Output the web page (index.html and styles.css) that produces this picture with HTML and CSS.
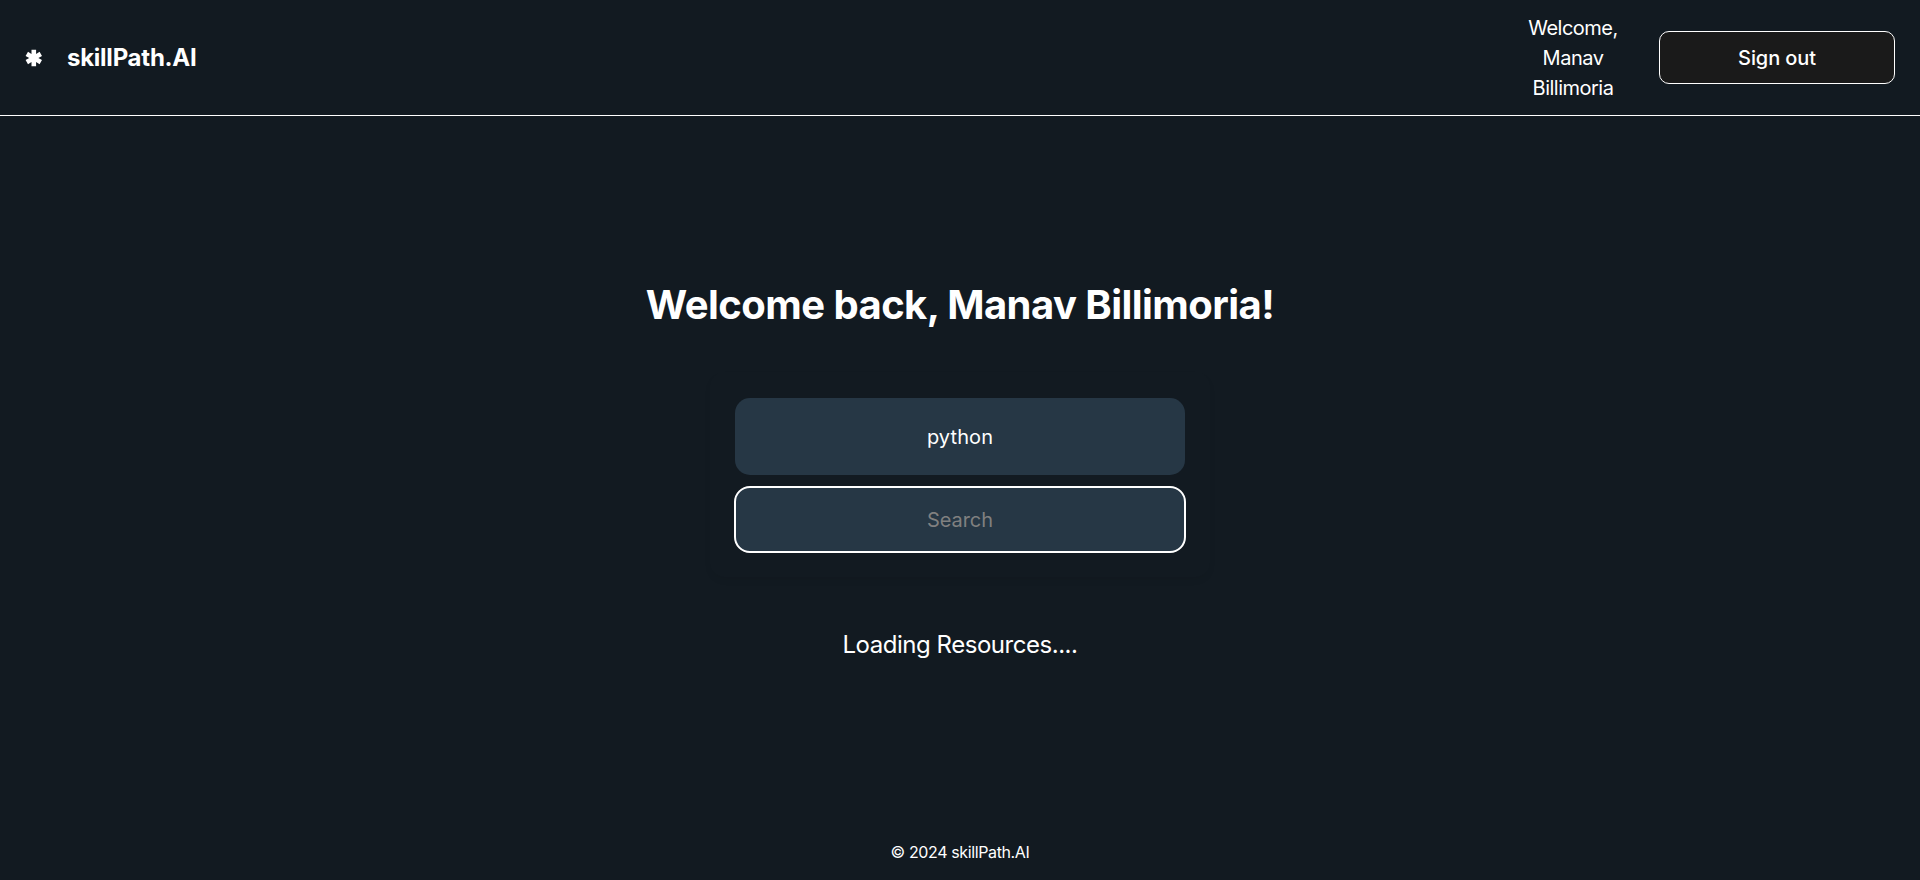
FILE: index.html
```
<!DOCTYPE html>
<html lang="en">
<head>
  <meta charset="UTF-8">
  <title>skillPath.AI</title>
  <link rel="stylesheet" href="styles.css">
</head>
<body>
  <header class="header">
    <div class="brand">
      <svg class="logo" viewBox="0 0 18 18" fill="currentColor">
        <path d="M6.5 0.8H11.1V5L14.6 2.8L17 7L13.4 9L17 11L14.6 15.2L11.1 13V17.2H6.5V13L3 15.2L0.6 11L4.2 9L0.6 7L3 2.8L6.5 5Z"/>
      </svg>
      <h2 class="brand-name">skillPath.AI</h2>
    </div>
    <div class="user">
      <p class="welcome">Welcome, Manav Billimoria</p>
      <button class="sign-out">Sign out</button>
    </div>
  </header>

  <main class="main">
    <h1 class="title">Welcome back, Manav Billimoria!</h1>
    <form class="search-form">
      <input type="text" class="topic" value="python">
      <input type="button" class="search" value="Search">
    </form>
    <p class="loading">Loading Resources....</p>
  </main>

  <footer class="footer">© 2024 skillPath.AI</footer>
</body>
</html>
```

FILE: styles.css
```
* {
  box-sizing: border-box;
}

body {
  display: flex;
  flex-direction: column;
  height: 100vh;
  margin: 0;
  overflow: hidden;
  background-color: #121a21;
  color: #fff;
  font-family: Inter, "Noto Sans", sans-serif;
}

.header {
  display: flex;
  justify-content: space-between;
  align-items: center;
  height: 116px;
  padding: 0 25px;
  border-bottom: 1px solid #fff;
}

.brand {
  display: flex;
  align-items: center;
  gap: 24px;
}

.logo {
  width: 18px;
  height: 18px;
}

.brand-name {
  margin: 0;
  font-size: 24px;
  font-weight: 700;
  line-height: 30px;
  letter-spacing: -0.25px;
}

.user {
  display: flex;
  align-items: center;
  gap: 36px;
}

.welcome {
  width: 100px;
  margin: 0;
  font-size: 20px;
  line-height: 30px;
  letter-spacing: -0.5px;
  text-align: center;
}

.sign-out {
  width: 236px;
  height: 53px;
  border: 1px solid #fff;
  border-radius: 10px;
  background-color: #1a1a1a;
  color: #fff;
  font-family: inherit;
  font-size: 20px;
  font-weight: 500;
  letter-spacing: -0.1px;
}

.main {
  display: flex;
  flex: 1;
  flex-direction: column;
  align-items: center;
}

.title {
  margin: 159px 0 0;
  font-size: 40px;
  font-weight: 700;
  line-height: 60px;
  letter-spacing: -0.56px;
}

.search-form {
  display: flex;
  flex-direction: column;
  gap: 12px;
  width: 500px;
  margin-top: 37px;
  padding: 26px 25px 25px;
  border-radius: 15px;
  box-shadow: 0 4px 6px rgba(0, 0, 0, 0.05);
}

.topic,
.search {
  width: 100%;
  border: none;
  border-radius: 15px;
  background-color: #263745;
  color: #fff;
  font-family: inherit;
  font-size: 20px;
  letter-spacing: 0.1px;
  text-align: center;
}

.topic {
  height: 77px;
}

.search {
  height: 65px;
  outline: 2px solid #fff;
  outline-offset: -1px;
  color: #808080;
  letter-spacing: -0.05px;
}

.loading {
  margin: 50px 0 0;
  font-size: 24px;
  line-height: 36px;
  letter-spacing: -0.47px;
}

.footer {
  padding-bottom: 16px;
  font-size: 16px;
  line-height: 24px;
  letter-spacing: -0.38px;
  text-align: center;
}
```
